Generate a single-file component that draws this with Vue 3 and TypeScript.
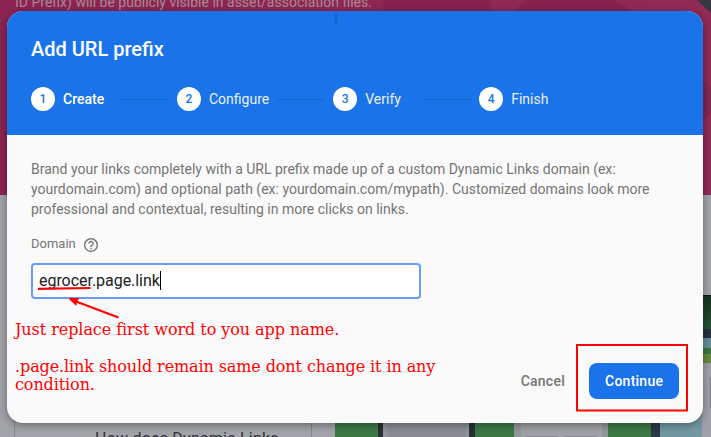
<script setup lang="ts">
import { ref } from 'vue'

const steps: string[] = ['Create', 'Configure', 'Verify', 'Finish']
const current = ref(0)
const domain = ref('egrocer.page.link')
</script>

<template>
  <main class="page">
    <svg class="backdrop" viewBox="0 0 711 437" aria-hidden="true">
      <defs>
        <linearGradient id="hero" x1="0" x2="1"><stop offset="0" stop-color="#8b2450" /><stop offset="1" stop-color="#912b55" /></linearGradient>
        <linearGradient id="forest" x1="0" y1="0" x2="0" y2="1"><stop offset="0" stop-color="#17301f" /><stop offset="1" stop-color="#285336" /></linearGradient>
      </defs>
      <rect width="711" height="437" fill="#a2a4a9" />
      <rect width="711" height="195" fill="url(#hero)" />
      <rect x="382" y="-12" width="109" height="30" rx="15" fill="#86234e" />
      <path d="M530 0H615L650 22H516V12Q518 3 530 0Z" fill="#86234e" />
      <path d="M697 0H711V13Z" fill="#35383d" />
      <path d="M702 77L711 87V112L702 122Z" fill="#842650" />
      <rect x="14.5" y="400" width="297" height="60" fill="#a1a4a8" stroke="#85898d" />
      <rect x="335" y="400" width="43" height="37" fill="#3c7944" />
      <rect x="378" y="400" width="5" height="37" fill="#292f33" />
      <rect x="383" y="400" width="86" height="37" fill="#91959a" />
      <rect x="387" y="400" width="79" height="37" fill="#898d92" />
      <rect x="469" y="400" width="6" height="37" fill="#292f33" />
      <rect x="475" y="400" width="39" height="37" fill="#3c7944" />
      <rect x="514" y="400" width="94" height="37" fill="#93969b" />
      <path d="M521 415H602V437H521Z" fill="#9ea1a6" />
      <path d="M526 436.5H558M564 436.5H597" stroke="#888c91" stroke-width="1" />
      <rect x="608" y="400" width="43" height="37" fill="#3c7944" />
      <rect x="651" y="400" width="9" height="37" fill="#2a3a47" />
      <rect x="660" y="400" width="42" height="37" fill="#7198a0" />
      <rect x="702" y="295" width="9" height="142" fill="#9fa1a7" />
      <rect x="702" y="295" width="9" height="35" fill="url(#forest)" />
      <rect x="702" y="295" width="9" height="1" fill="#101713" />
      <rect x="702" y="329" width="9" height="9" fill="#27343f" />
      <rect x="702" y="338" width="9" height="10" fill="#688e96" />
      <rect x="702" y="348" width="9" height="6" fill="#3a763f" />
      <rect x="702" y="354" width="9" height="9" fill="#688840" />
      <rect x="710" y="377" width="1" height="31" fill="#7e8185" />
      <text class="notice" x="15" y="7">ID Prefix) will be publicly visible in asset/association files.</text>
      <text class="question" x="95" y="444">How does Dynamic Links</text>
    </svg>

    <section class="dialog" role="dialog">
      <header class="head">
        <h1>Add URL prefix</h1>
        <ol class="steps">
          <li v-for="(step, i) in steps" :key="step" class="step">
            <span class="number">{{ i + 1 }}</span>
            <span class="label" :class="{ active: i === current }">{{ step }}</span>
            <span v-if="i < steps.length - 1" class="line"></span>
          </li>
        </ol>
      </header>
      <div class="content">
        <p>Brand your links completely with a URL prefix made up of a custom Dynamic Links domain (ex: yourdomain.com) and optional path (ex: yourdomain.com/mypath). Customized domains look more professional and contextual, resulting in more clicks on links.</p>
        <div class="field-label">
          <span>Domain</span>
          <svg width="14" height="14" viewBox="2 2 20 20"><path fill="currentColor" d="M11 18h2v-2h-2v2zm1-16C6.48 2 2 6.48 2 12s4.48 10 10 10 10-4.48 10-10S17.52 2 12 2zm0 18c-4.41 0-8-3.59-8-8s3.59-8 8-8 8 3.59 8 8-3.59 8-8 8zm0-14c-2.21 0-4 1.79-4 4h2c0-1.1.9-2 2-2s2 .9 2 2c0 2-3 1.75-3 5h2c0-2.25 3-2.5 3-5 0-2.21-1.79-4-4-4z" /></svg>
        </div>
        <div class="input"><span>{{ domain }}</span><i class="caret"></i></div>
      </div>
      <footer class="actions">
        <button class="cancel">Cancel</button>
        <button class="continue">Continue</button>
      </footer>
    </section>

    <svg class="marks" viewBox="0 0 711 437" aria-hidden="true">
      <path d="M336 11V23" stroke="#1967ce" stroke-width="3" />
      <path d="M38 288.8L90.5 288" stroke="#f00" stroke-width="2.2" />
      <path d="M118.5 317.5L76 301.5" stroke="#f00" stroke-width="2" />
      <path d="M68 298L79.3 298L77 301.7L76.2 306Z" fill="#f00" />
      <rect x="577" y="345" width="110" height="65.5" fill="none" stroke="#f00" stroke-width="2" />
    </svg>
    <div class="note first">Just replace first word to you app name.</div>
    <div class="note second">.page.link should remain same dont change it in any<br />condition.</div>
  </main>
</template>

<style>
body { overflow: hidden; }
</style>

<style scoped>
.page {
  position: relative;
  box-sizing: border-box;
  width: 711px;
  height: 437px;
  padding: 11px 8px 14px 7px;
  overflow: hidden;
  font-family: Roboto, sans-serif;
}
.backdrop, .marks { position: absolute; top: 0; left: 0; width: 711px; height: 437px; }
.marks { pointer-events: none; }
.notice { font-size: 14px; fill: #a98a96; }
.question { font-size: 16px; letter-spacing: .22px; fill: #303236; }
.dialog {
  position: relative;
  display: flex;
  flex-direction: column;
  width: 696px;
  height: 412px;
  border-radius: 16px;
  overflow: hidden;
  background: #fafafa;
  box-shadow: 0 2px 8px rgba(0, 0, 0, .38);
}
.head {
  box-sizing: border-box;
  height: 124px;
  flex: none;
  padding: 24px;
  background: #1a73e8;
  color: #fff;
}
h1 { margin: 0 0 24px; font-size: 20px; line-height: 28px; font-weight: 500; }
.steps { display: flex; gap: 8px; margin: 0; padding: 0; list-style: none; }
.step { display: flex; align-items: center; gap: 8px; }
.number {
  display: grid;
  place-items: center;
  width: 24px;
  height: 24px;
  border-radius: 50%;
  background: #fff;
  color: #1a73e8;
  font-size: 12px;
  font-weight: 500;
}
.label { min-width: 50px; font-size: 14px; line-height: 24px; color: #e8f0fd; }
.label.active { color: #fff; font-weight: 500; }
.line { width: 48px; height: 1px; background: #1766ce; }
.content { padding: 24px; }
p { width: 630px; margin: 0; font-size: 14px; line-height: 20px; color: #757575; }
.field-label {
  display: flex;
  align-items: center;
  gap: 8px;
  height: 16px;
  margin-top: 18px;
  font-size: 13px;
  line-height: 14px;
  color: #757575;
}
.field-label span { padding-bottom: 2px; }
.input {
  box-sizing: border-box;
  display: flex;
  align-items: center;
  width: 390px;
  height: 36px;
  margin-top: 10px;
  padding: 0 6px 2px;
  border: 2px solid #669df6;
  border-radius: 4px;
  background: #fff;
  font-size: 16px;
  letter-spacing: -.04px;
  color: #212121;
}
.caret { width: 1px; height: 19px; background: #000; }
.actions {
  display: flex;
  justify-content: flex-end;
  gap: 8px;
  margin-top: auto;
  padding: 24px;
}
button {
  height: 36px;
  padding: 0 16px;
  border: 0;
  border-radius: 8px;
  background: transparent;
  color: #757575;
  font: 500 14px Roboto, sans-serif;
  letter-spacing: .25px;
}
.continue { width: 90px; background: #1a73e8; color: #fff; }
.note { position: absolute; left: 15px; font: 16px/18px "DejaVu Serif", serif; color: #f00; white-space: nowrap; }
.first { top: 321px; letter-spacing: -.06px; }
.second { top: 358px; letter-spacing: -.1px; }
</style>
